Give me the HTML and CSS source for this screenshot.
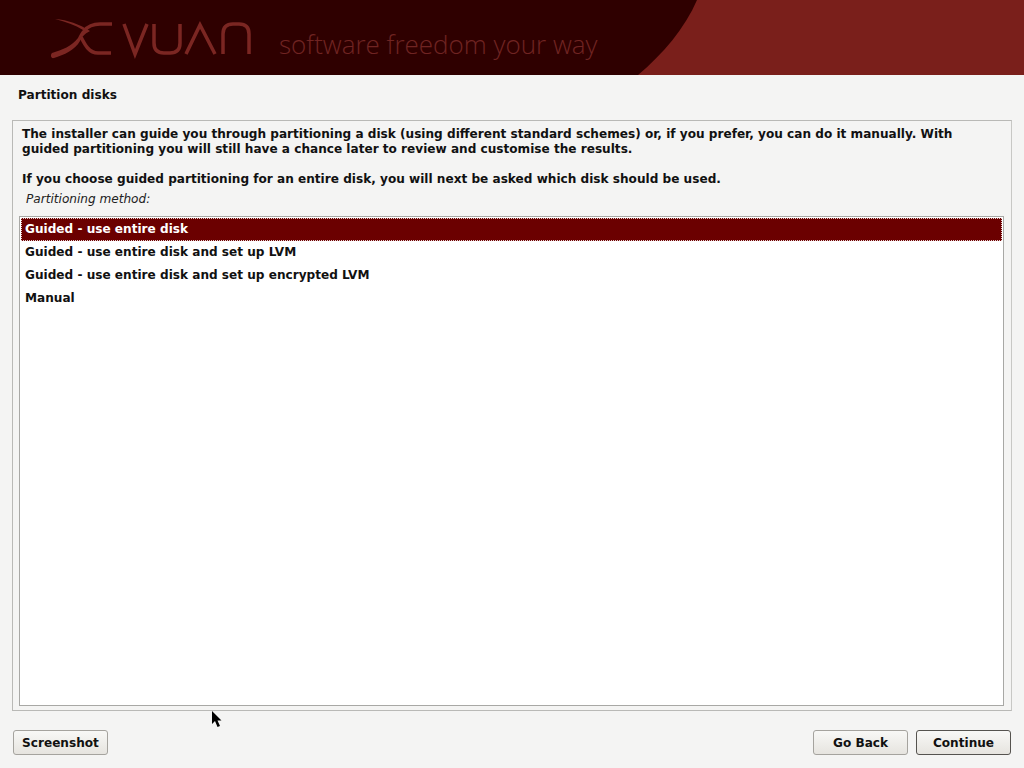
FILE: index.html
```html
<!DOCTYPE html>
<html lang="en">
<head>
  <meta charset="UTF-8">
  <title>Partition disks</title>
  <link rel="stylesheet" href="styles.css">
</head>
<body>
  <div class="banner">
    <svg class="logo" width="204" height="75" viewBox="50 0 204 75">
      <path class="logo-fill" d="M55 19 C68 20 79 24 90 31 C84 34 82 37 80 41 C75 50 64 55 54 58 C51 59 50 55 52 53 C62 50 72 46 78 38 C80 34 81 32 83 30 C75 25 66 22 55 19 Z"/>
      <path class="logo-line" d="M84 31 C88 26 93 24 100 24 L112 24"/>
      <path class="logo-line" d="M81 37 C85 45 89 53 98 53 L111 53"/>
      <path class="logo-line" d="M124 24 L135 54 L147 24"/>
      <path class="logo-line" d="M154 24 L154 43 Q154 53 164 53 L170 53 Q180 53 180 43 L180 24"/>
      <path class="logo-line" d="M186 54 L200 25 L215 54"/>
      <path class="logo-line" d="M223 54 L223 34 Q223 24 233 24 L239 24 Q249 24 249 34 L249 54"/>
    </svg>
    <span class="tagline">software freedom your way</span>
    <svg class="curve" width="386" height="75" viewBox="0 0 386 75">
      <path d="M59 0 C47 28 25 54 0 75 L386 75 L386 0 Z"/>
    </svg>
  </div>

  <h1>Partition disks</h1>

  <div class="panel">
    <p>The installer can guide you through partitioning a disk (using different standard schemes) or, if you prefer, you can do it manually. With guided partitioning you will still have a chance later to review and customise the results.</p>
    <p class="second">If you choose guided partitioning for an entire disk, you will next be asked which disk should be used.</p>
    <div class="label">Partitioning method:</div>
    <ul class="list">
      <li class="selected">Guided - use entire disk</li>
      <li>Guided - use entire disk and set up LVM</li>
      <li>Guided - use entire disk and set up encrypted LVM</li>
      <li>Manual</li>
    </ul>
  </div>

  <div class="buttons">
    <button>Screenshot</button>
    <div class="buttons-right">
      <button>Go Back</button>
      <button class="default">Continue</button>
    </div>
  </div>

  <svg class="cursor" width="12" height="17" viewBox="0 0 12 17">
    <path d="M1 0 L1 13 L4 10 L6.5 16 L9 15 L6.5 9.5 L10.5 9.5 Z"/>
  </svg>
</body>
</html>
```

FILE: styles.css
```css
html, body {
  height: 100%;
}
body {
  margin: 0;
  height: 768px;
  overflow: hidden;
  background-color: #f4f4f3;
  font-family: "DejaVu Sans", sans-serif;
  font-size: 12.1px;
  font-weight: bold;
  color: #111;
  display: flex;
  flex-direction: column;
}
.banner {
  height: 75px;
  flex: none;
  background-color: #2f0000;
  display: flex;
  align-items: flex-start;
}
.logo {
  margin-left: 50px;
  flex: none;
}
.logo path {
  fill: none;
  stroke: #7b2622;
  stroke-width: 3.5;
}
.logo .logo-fill {
  fill: #7b2622;
  stroke: none;
}
.tagline {
  margin-left: 25px;
  margin-top: 27px;
  font-family: "Open Sans", sans-serif;
  font-size: 26px;
  line-height: 34px;
  font-weight: 300;
  color: #702422;
  white-space: nowrap;
}
.curve {
  margin-left: auto;
  flex: none;
}
.curve path {
  fill: #7a1f1b;
}
h1 {
  font-size: 12.1px;
  line-height: 16px;
  margin: 12px 0 0 18px;
  flex: none;
}
.panel {
  margin: 17px 12px 0;
  height: 591px;
  flex: none;
  box-sizing: border-box;
  border: 1px solid #b9b9b6;
  border-right-color: #c8c8c5;
  padding: 6px 7px 4px 6px;
  display: flex;
  flex-direction: column;
}
.panel p {
  margin: 0 40px 0 3px;
  line-height: 15px;
}
.panel .second {
  margin-top: 15px;
}
.label {
  font-weight: normal;
  font-style: italic;
  margin: 5px 0 0 7px;
  line-height: 15px;
  color: #222;
}
.list {
  list-style: none;
  margin: 9px 0 0;
  padding: 1px;
  flex: 1;
  background-color: #fff;
  border: 1px solid #a8a8a5;
}
.list li {
  height: 23px;
  line-height: 23px;
  padding-left: 4px;
}
.list .selected {
  background-color: #6b0000;
  color: #fff;
  outline: 1px dotted #e8d0d0;
  outline-offset: -1px;
}
.buttons {
  display: flex;
  justify-content: space-between;
  margin: 19px 13px 0;
}
.buttons-right {
  display: flex;
  gap: 8px;
}
button {
  height: 25px;
  width: 95px;
  padding: 0;
  font-family: inherit;
  font-size: 12.1px;
  font-weight: bold;
  color: #111;
  border: 1px solid #a5a39e;
  border-radius: 3px;
  background: linear-gradient(#f8f8f6, #e6e4df);
}
button.default {
  border-color: #55534f;
}
.cursor {
  position: absolute;
  left: 211px;
  top: 711px;
}
.cursor path {
  fill: #000;
}
```
